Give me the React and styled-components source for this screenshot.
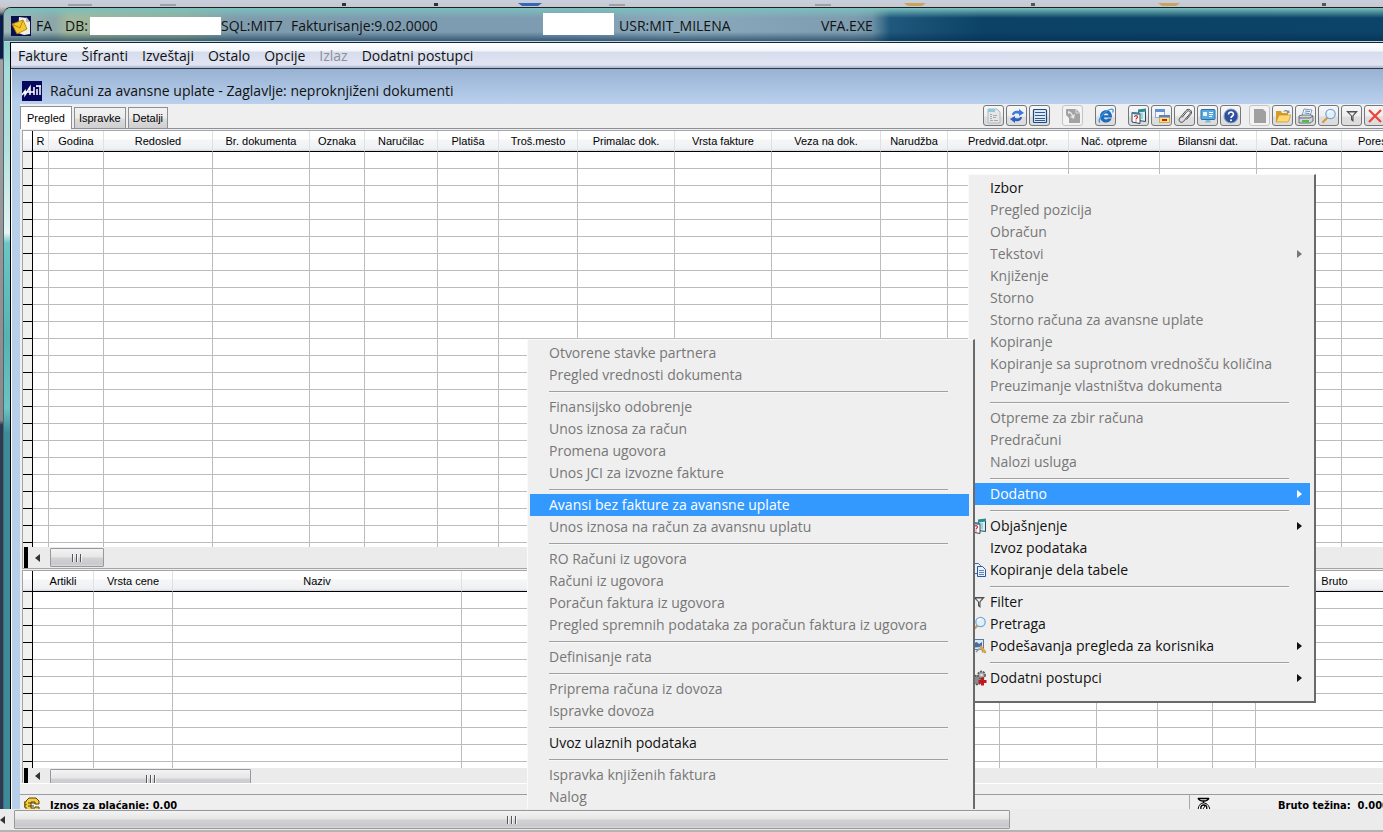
import React from 'react';
import styled, { createGlobalStyle, css } from 'styled-components';

const UI_FONT = '"Open Sans", "Noto Sans", sans-serif';
const SMALL_FONT = '"Liberation Sans", Arial, sans-serif';

const MENU_BAR = [
    { label: 'Fakture' },
    { label: 'Šifranti' },
    { label: 'Izveštaji' },
    { label: 'Ostalo' },
    { label: 'Opcije' },
    { label: 'Izlaz', disabled: true },
    { label: 'Dodatni postupci' },
];

const TABS = ['Pregled', 'Ispravke', 'Detalji'];

const TOOL_GROUPS = [
    [
        { icon: 'form', label: 'Obrazac', off: true },
        { icon: 'refresh', label: 'Osveži' },
        { icon: 'list', label: 'Lista' },
    ],
    [{ icon: 'export', label: 'Izvoz', off: true, faint: true }],
    [{ icon: 'browser', label: 'Internet' }],
    [
        { icon: 'explain', label: 'Objašnjenje' },
        { icon: 'windows', label: 'Prozori' },
        { icon: 'clip', label: 'Prilozi' },
        { icon: 'monitor', label: 'Podešavanja' },
        { icon: 'help', label: 'Pomoć' },
    ],
    [
        { icon: 'blank', label: 'Novi', off: true, faint: true },
        { icon: 'folder', label: 'Otvori' },
        { icon: 'printer', label: 'Štampa' },
        { icon: 'search', label: 'Pretraga' },
        { icon: 'filter', label: 'Filter' },
        { icon: 'close', label: 'Zatvori' },
    ],
];

const INVOICE_COLUMNS = [
    ['R', 16],
    ['Godina', 55],
    ['Redosled', 109],
    ['Br. dokumenta', 97],
    ['Oznaka', 55],
    ['Naručilac', 73],
    ['Platiša', 61],
    ['Troš.mesto', 79],
    ['Primalac dok.', 97],
    ['Vrsta fakture', 97],
    ['Veza na dok.', 109],
    ['Narudžba', 67],
    ['Predviđ.dat.otpr.', 121],
    ['Nač. otpreme', 91],
    ['Bilansni dat.', 97],
    ['Dat. računa', 85],
    ['Poreski dat.', 91],
];

const ITEM_COLUMNS = [
    ['Artikli', 61],
    ['Vrsta cene', 79],
    ['Naziv', 289],
    ['', 538],
    ['', 97],
    ['', 61],
    ['', 55],
    ['', 43],
    ['Bruto', 158],
];

const CONTEXT_MENU = [
    { label: 'Izbor' },
    { label: 'Pregled pozicija', disabled: true },
    { label: 'Obračun', disabled: true },
    { label: 'Tekstovi', disabled: true, more: true },
    { label: 'Knjiženje', disabled: true },
    { label: 'Storno', disabled: true },
    { label: 'Storno računa za avansne uplate', disabled: true },
    { label: 'Kopiranje', disabled: true },
    { label: 'Kopiranje sa suprotnom vrednošču količina', disabled: true },
    { label: 'Preuzimanje vlastništva dokumenta', disabled: true },
    null,
    { label: 'Otpreme za zbir računa', disabled: true },
    { label: 'Predračuni', disabled: true },
    { label: 'Nalozi usluga', disabled: true },
    null,
    { label: 'Dodatno', active: true, more: true },
    null,
    { label: 'Objašnjenje', icon: 'explain', more: true },
    { label: 'Izvoz podataka' },
    { label: 'Kopiranje dela tabele', icon: 'copy' },
    null,
    { label: 'Filter', icon: 'filter' },
    { label: 'Pretraga', icon: 'search' },
    { label: 'Podešavanja pregleda za korisnika', icon: 'settings', more: true },
    null,
    { label: 'Dodatni postupci', icon: 'gears', more: true },
];

const SUB_MENU = [
    { label: 'Otvorene stavke partnera', disabled: true },
    { label: 'Pregled vrednosti dokumenta', disabled: true },
    null,
    { label: 'Finansijsko odobrenje', disabled: true },
    { label: 'Unos iznosa za račun', disabled: true },
    { label: 'Promena ugovora', disabled: true },
    { label: 'Unos JCI za izvozne fakture', disabled: true },
    null,
    { label: 'Avansi bez fakture za avansne uplate', active: true },
    { label: 'Unos iznosa na račun za avansnu uplatu', disabled: true },
    null,
    { label: 'RO Računi iz ugovora', disabled: true },
    { label: 'Računi iz ugovora', disabled: true },
    { label: 'Poračun faktura iz ugovora', disabled: true },
    { label: 'Pregled spremnih podataka za poračun faktura iz ugovora', disabled: true },
    null,
    { label: 'Definisanje rata', disabled: true },
    null,
    { label: 'Priprema računa iz dovoza', disabled: true },
    { label: 'Ispravke dovoza', disabled: true },
    null,
    { label: 'Uvoz ulaznih podataka' },
    null,
    { label: 'Ispravka knjiženih faktura', disabled: true },
    { label: 'Nalog', disabled: true },
];

const ICONS = {
    form: (
        <>
            <path d="M2 1h9l3 3v11H2z" fill="#e4e6e8" stroke="#b4b8bb" />
            <path d="M2 1h7v3H2z" fill="#8ccbe0" />
            <path d="M4 6.500h2M4 8.500h2M4 10.500h2M4 12.500h3M7 7.500h4M7 9.500h3M8 12.500h4" stroke="#a4a9ac" />
        </>
    ),
    refresh: (
        <>
            <path d="M3 7c0-3 3-5 7-4V1l5 4-5 3V6C7 5 5 6 5 7z" fill="#3a7be0" />
            <path d="M13 9c0 3-3 5-7 4v2l-5-4 5-3v2c3 1 5 0 5-1z" fill="#2a62c8" />
        </>
    ),
    list: (
        <>
            <rect x="1.5" y="1.5" width="13" height="13" rx="1" fill="#dcebf7" stroke="#1d4a80" strokeWidth="1.2" />
            <path d="M3 4.5h10M3 7.5h10M3 10.5h10M3 12.5h10" stroke="#2d5a90" />
        </>
    ),
    export: (
        <>
            <path d="M1 1h10l4 4v10H4v-5L1 7z" fill="#a3a3a3" />
            <path d="M3 3l3 1 2 3 2-1-1 5-4-2 2-1-2-3-2 1z" fill="#e6e6e6" />
            <path d="M11 1v4h4" stroke="#dcdcdc" fill="none" />
        </>
    ),
    browser: (
        <>
            <path
                d="M14 9.500H5.800c.2 2.200 3 2.600 4.200 1h3.600C12.800 13 10.600 14.500 8.200 14.500c-3.600 0-6.200-2.600-6.200-6.100C2 5 4.600 2.300 8.200 2.300S14.200 5 14 9.500zM5.800 7.200h4.700C10.300 4.900 6.200 4.900 5.800 7.200z"
                fill="#1c6cc0"
            />
            <path d="M2 14.500c-2.500-2 2.500-10.500 10-13 3-1 4 .5 2.500 3" fill="none" stroke="#3b97e0" strokeWidth="1.300" />
        </>
    ),
    explain: (
        <>
            <path d="M7.500 2.500l7-1v12l-7-1z" fill="#d5eef2" stroke="#2f4858" />
            <path d="M7 1.500l8-1v3l-8 1z" fill="#2f8c90" />
            <path d="M1 4.500l8 1v10l-8-1.500z" fill="#fff" stroke="#2f4858" />
            <path d="M1 4l8 1v2l-8-1z" fill="#3c7fa0" />
            <path d="M3.500 9c0-2 3-1.500 3 0 0 1-1.500 1-1.500 2.500M5 12.500v1" fill="none" stroke="#d8303a" strokeWidth="1.300" />
            <path d="M11 5v6" stroke="#7bb0bb" />
        </>
    ),
    windows: (
        <>
            <rect x="1.5" y="1.5" width="9" height="8" fill="#f4f8fc" stroke="#8facd4" />
            <path d="M1 1h10v3H1z" fill="#5f91d4" />
            <rect x="5.5" y="7.5" width="10" height="7" fill="#ffe271" stroke="#c9b060" />
            <path d="M5 7h11v2.500H5z" fill="#5b82bf" />
            <path d="M8 11h5v2H8z" fill="#c8201c" />
        </>
    ),
    clip: (
        <path
            d="M5 9.500l5-6c1.600-1.900 4.400.3 2.900 2.200l-6.300 7.600c-2.200 2.700-6 -.4-3.900-3.100L9 2.500c2.600-3.100 7.400.6 4.800 3.900L9.500 11.500"
            fill="none"
            stroke="#4a4a4a"
        />
    ),
    monitor: (
        <>
            <rect x="1" y="1.500" width="14" height="10" rx="1" fill="#58a9df" stroke="#2a70a8" />
            <rect x="3" y="4" width="4" height="4" fill="#e8f4fb" />
            <path d="M9 4.500h4M9 6.500h4M9 8.500h3" stroke="#fff" />
            <path d="M6 12h4l1 2.500H5z" fill="#7fbbe0" />
        </>
    ),
    help: (
        <>
            <circle cx="8" cy="8" r="7" fill="#2c4f9f" stroke="#8d9cb8" />
            <path d="M5.500 6.500c0-3.500 5-3 5 0C10.500 8 8 8 8 10" fill="none" stroke="#fff" strokeWidth="1.600" />
            <circle cx="8" cy="12.300" r="1" fill="#fff" />
        </>
    ),
    blank: <path d="M2 1h9l3 3v11H2z" fill="#a0a0a0" />,
    folder: (
        <>
            <path d="M1 3h5l1 2h6v9H1z" fill="#d69b28" />
            <path d="M4 7h12l-3 7H1z" fill="#ffd870" stroke="#c08a20" strokeWidth=".6" />
            <path d="M8 4c1.500-2.500 4-2.500 5-1l1.200-1 .3 3.200-3.200-.4L12.300 4C11 3 9.500 3 8 4z" fill="#7d8b98" />
        </>
    ),
    printer: (
        <>
            <path d="M6 1l8 1-2 6H4z" fill="#fff" stroke="#6d7f98" strokeWidth=".8" />
            <path d="M7 3l5 .5M6.500 5l5 .5" stroke="#4b86c8" />
            <path d="M1 8l3-1h9l2 1v5l-3 2H1z" fill="#d0d5da" stroke="#4f5a66" strokeWidth=".8" />
            <path d="M1 10h11l3-2" fill="none" stroke="#5f6a75" />
            <path d="M4 12h7v2.500H4z" fill="#55b848" />
        </>
    ),
    search: (
        <>
            <path d="M6.500 9.500L2 14" stroke="#d89a4a" strokeWidth="2.400" strokeLinecap="round" />
            <circle cx="9.500" cy="6" r="4.700" fill="#dff0fb" stroke="#7aa7d4" strokeWidth="1.300" />
            <path d="M7 5c.5-1.500 2-2 3-1.800" fill="none" stroke="#fff" strokeWidth="1.200" />
        </>
    ),
    filter: <path d="M2 3h12l-4.500 5v6L7 12V8zM5 4.500L8.200 8v3l.3.300V7.500l2.500-3z" fill="#505050" fillRule="evenodd" />,
    close: <path d="M2 2l12 12M14 2L2 14" stroke="#ee4438" strokeWidth="2.200" />,
    copy: (
        <>
            <path d="M1.500 1.500h6l2 2v8h-8z" fill="#e9f1fb" stroke="#3f66ad" />
            <path d="M6.500 4.500h5l3 3v7h-8z" fill="#e9f1fb" stroke="#2d54a0" />
            <path d="M8 8.500h5M8 10.500h5M8 12.500h5" stroke="#5b84c8" />
        </>
    ),
    settings: (
        <>
            <rect x="1.500" y="1.500" width="11" height="10" fill="#dbe9f6" stroke="#5b78a5" />
            <path d="M3 9.500V5l3-1 2 2 3-2v5z" fill="#4a6d9f" />
            <path d="M5 14l3-3 3 .5 1 3" fill="none" stroke="#8a97a8" strokeWidth="1.500" />
            <path d="M10 9l4 5" stroke="#e0a23a" strokeWidth="2.600" strokeLinecap="round" />
        </>
    ),
    gears: (
        <>
            <circle cx="6" cy="10" r="4.500" fill="#8b8b8b" stroke="#4c4c4c" strokeDasharray="2 1" strokeWidth="1.600" />
            <circle cx="10.500" cy="5" r="3.600" fill="#a5a5a5" stroke="#5a5a5a" strokeDasharray="2 1" strokeWidth="1.600" />
            <circle cx="10.500" cy="5" r="1.300" fill="#e2e2e2" />
            <path d="M11.500 7.500v8M7.500 11.500h8" stroke="#c8141c" strokeWidth="3" />
        </>
    ),
};

const Icon = ({ name }) => (
    <svg width="16" height="16" viewBox="0 0 16 16" fill="none" aria-hidden="true">
        {ICONS[name]}
    </svg>
);

const DesktopMarks = () => (
    <svg width="1383" height="7" aria-hidden="true">
        <path d="M68 5h24M160 5h16M609 5h16M815 5h16" stroke="#75767b" strokeWidth="1" />
        <path d="M342 3h4v3h-4zM434 3h4v3h-4z" fill="#333" />
        <path d="M518 3h24l-4 3h-16z" fill="#3565b8" />
        <path d="M904 3h22l-4 3h-14zM1158 3h22l-4 3h-14z" fill="#c8a45e" />
        <path d="M1031 3h4v3h-4zM1322 3h4v3h-4z" fill="#555" />
    </svg>
);

const AppIcon = () => (
    <svg width="20" height="20" viewBox="0 0 20 20" aria-hidden="true">
        <rect width="20" height="20" fill="#0a0f50" />
        <path d="M8 1l8 1 3 4v12l-6 1-6-2z" fill="#f2f0e2" />
        <path d="M15 1v5h4z" fill="#b9b9ad" />
        <path d="M1 8l11-4 4 9-10 5z" fill="#f4c92c" stroke="#a87b08" strokeWidth=".8" />
        <path d="M1 8l8 4 3-8" fill="none" stroke="#b78a10" />
    </svg>
);

const MitIcon = () => (
    <svg width="20" height="20" viewBox="0 0 20 20" aria-hidden="true">
        <rect width="20" height="20" fill="#05085c" />
        <path d="M0 14l3-4v4l5-8v8M3 11h9M12 14V6M15 14V8M15 6V5M14 5h5M18 5v9" fill="none" stroke="#fff" strokeWidth="1.500" />
    </svg>
);

const MoneyIcon = () => (
    <svg width="16" height="16" viewBox="0 0 16 16" aria-hidden="true">
        <path d="M5 1h7l3 3v3h-4V5H7v6h4v-1h4v2l-3 3H5l-3-3v-2H0V8h2V7H0V5h2V4z" fill="#f5cd38" stroke="#5a4208" />
        <path d="M4 6h7M4 9h6" stroke="#5a4208" />
    </svg>
);

const ScaleIcon = () => (
    <svg width="14" height="16" viewBox="0 0 14 16" aria-hidden="true">
        <path d="M1 1.500h11M1 1c1 3 3 3 5.500 3S11 4 12 1M6.500 4v2" fill="none" stroke="#000" strokeWidth="1.300" />
        <path d="M1 15c0-6 2-9 5.500-9S13 9 13 15z" fill="#fff" stroke="#000" />
        <circle cx="6.800" cy="11" r="3" fill="#fff" stroke="#000" strokeWidth="1.300" />
        <path d="M6 12l2-3" stroke="#000" />
    </svg>
);

const GlobalStyle = createGlobalStyle`
    * { box-sizing: border-box; }
    body {
        margin: 0;
        overflow: hidden;
        background: #efefef;
        font-family: ${UI_FONT};
        font-size: 14px;
        color: #111;
    }
    button {
        font: inherit;
        color: inherit;
        border: 0;
        padding: 0;
        margin: 0;
        background: none;
        text-align: left;
        white-space: nowrap;
    }
    svg { display: block; flex: none; }
`;

const Page = styled.div`
    display: flex;
    flex-direction: column;
    height: 100vh;
`;

const Stage = styled.div`
    position: relative;
    flex: 1;
    min-height: 0;
    display: flex;
    flex-direction: column;
    overflow: hidden;
    background: linear-gradient(#c9ced9 0, #c9c6ca 7px, #8f8d90 12px, #0c1c4a 16px, #0c1c4a 58px, #a3a0a3 60px, #8c898b 420px, #2b3a55 425px);
`;

const DesktopStrip = styled.div`
    height: 7px;
    flex: none;
    overflow: hidden;
    background: linear-gradient(#c6d0df, #cbc7cb);
`;

const AppWindow = styled.div`
    flex: 1;
    min-height: 0;
    display: flex;
    flex-direction: column;
    margin-left: 3px;
    border-top: 1px solid #14242c;
    border-left: 1px solid #4d686c;
    border-radius: 8px 0 0 0;
    overflow: hidden;
    background: linear-gradient(#74bdbb 0, #a5dcda 60px, #b2e0de 140px, #e4f5f4 225px, #6cc6c6 235px, #56b3b4 330px, #6cc4c4 400px, #3d8b98 425px);
`;

const TitleBar = styled.header`
    height: 34px;
    flex: none;
    display: grid;
    grid-template-columns: 20px 29px 30px 131px 70px 252px 71px 207px 1fr;
    align-items: center;
    padding: 2px 0 0 7px;
    border-bottom: 1px solid #c2d4de;
    line-height: 20px;
    white-space: nowrap;
    background:
        linear-gradient(#7cc0bd 0, rgba(124, 192, 189, 0) 10px),
        linear-gradient(rgba(6, 44, 76, 0) 24px, rgba(6, 44, 76, 0.6) 33px),
        linear-gradient(90deg, #9fb9b9 0, #8da7a8 50px, #a3b89c 65px, #93ae9a 180px, #7f9cae 230px, #7d9cb2 560px, #8aa9bb 680px, #7d9cb0 850px, #6f92a6 868px, #1f587c 886px, #0b4266 980px, #0b4468 100%);

    span { padding-left: 5px; }
`;

const Redacted = styled.i`
    height: ${({ $tall }) => ($tall ? 22 : 18)}px;
    background: #fff;
    align-self: center;
    ${({ $tall }) => $tall && css`margin-bottom: 4px;`}
`;

const Body = styled.div`
    flex: 1;
    min-height: 0;
    display: flex;
    flex-direction: column;
    margin-left: 6px;
    border-left: 1px solid #000;
    border-top: 1px solid #10283c;
    background: #fff;
`;

const MenuBar = styled.nav`
    display: flex;
    gap: 14px;
    flex: none;
    height: 26px;
    padding-left: 7px;
    border-bottom: 1px solid #2c3850;
    background: linear-gradient(#fff 0, #f3f6fb 8px, #d5dded 9px, #e3e4f2 22px, #b4bccf 24px);
    line-height: 26px;
`;

const MenuBarButton = styled.button`
    &:disabled { color: #8f8f9a; }
`;

const ChildWindow = styled.main`
    flex: 1;
    min-height: 0;
    display: flex;
    flex-direction: column;
    margin: 0 -2px 0 1px;
    background: #b8cfe9;
`;

const ChildTitle = styled.h1`
    display: flex;
    align-items: center;
    gap: 8px;
    flex: none;
    height: 35px;
    margin: 0;
    padding: 8px 0 0 10px;
    font-size: 14px;
    font-weight: 400;
    background: linear-gradient(#99b2d2, #b9d1ee);
`;

const Client = styled.div`
    flex: 1;
    min-height: 0;
    display: flex;
    flex-direction: column;
    margin-left: 8px;
    background: #efefef;
`;

const TabRow = styled.div`
    display: flex;
    justify-content: space-between;
    align-items: flex-end;
    height: 25px;
    flex: none;
    border-bottom: 1px solid #8c9096;
`;

const TabList = styled.div`
    display: flex;
    align-items: flex-end;
    gap: 2px;
    font-family: ${SMALL_FONT};
    font-size: 11px;
`;

const Tab = styled.button`
    height: 21px;
    padding: 0 4px;
    border: 1px solid #8c9096;
    border-bottom: 0;
    color: #000;
    background: linear-gradient(#f2f2f2 0, #ebebeb 10px, #dcdcdc 11px, #cfcfcf 100%);

    &[aria-selected='true'] {
        height: 23px;
        padding: 0 6px;
        margin-bottom: -1px;
        background: #fff;
    }
`;

const Toolbar = styled.div`
    display: flex;
    align-self: flex-start;
    padding-top: 1px;
`;

const ToolGroup = styled.div`
    display: flex;
    gap: 2px;
    margin-left: 12px;

    &:last-child { margin-left: 8px; }
`;

const ToolButton = styled.button`
    display: flex;
    align-items: center;
    justify-content: center;
    width: 21px;
    height: 21px;
    border: 1px solid ${({ $faint }) => ($faint ? '#c4c4c4' : '#74777b')};
    border-radius: 3px;
    background: linear-gradient(#f7f7f7 0, #eee 10px, #dedede 11px, #dcdcdc 100%);
    ${({ $faint }) => $faint && css`background: #f3f3f3;`}
`;

const Pane = styled.section`
    display: flex;
    flex-direction: column;
    min-height: 0;
    margin: 1px 0 0 2px;
    border: solid #a3a5a9;
    border-width: 1px 0 0 1px;
    ${({ $grow }) => ($grow ? css`flex: 1; border-bottom-width: 1px;` : css`flex: 0 0 213px;`)}
`;

const GridView = styled.div`
    flex: 1;
    min-height: 0;
    overflow: hidden;
    background: #fff;
`;

const Grid = styled.table`
    table-layout: fixed;
    border-collapse: separate;
    border-spacing: 0;
    font-family: ${SMALL_FONT};
    font-size: 11px;
    line-height: 13px;
`;

const HeadCell = styled.th`
    height: 21px;
    padding: 0;
    overflow: hidden;
    font-weight: 400;
    white-space: nowrap;
    color: #000;
    border-right: 1px solid ${({ $mark }) => ($mark ? '#000' : '#dfe0e3')};
    border-bottom: 1px solid #000;
    background: linear-gradient(#fff 0, #fff 8px, #f5f6f8 9px, #eff0f3 18px, #d4d5d8 20px);
`;

const Cell = styled.td`
    height: 17px;
    padding: 0;
    border: solid ${({ $mark }) => ($mark ? '#000' : '#bcbcbc')};
    border-width: 0 1px 1px 0;
    background: ${({ $mark }) => ($mark ? '#f0f0ee' : '#fff')};
`;

const Scroll = styled.div`
    display: flex;
    flex: none;
    height: ${({ $height }) => $height}px;
    padding-left: 1px;
    overflow: hidden;
    background: #ebebeb;
`;

const MainScroll = styled(Scroll)`
    padding-left: 0;
    border-bottom: 2px solid #b4b4b4;
`;

const ScrollStop = styled.i`
    width: 4px;
    background: #000;
`;

const ScrollArrow = styled.button`
    display: flex;
    align-items: center;
    justify-content: center;
    width: ${({ $wide }) => ($wide ? 22 : 14)}px;
    flex: none;

    &::before {
        content: '';
        border: solid transparent;
        border-width: 4px 5px 4px 0;
        border-right-color: #333;
        margin-right: ${({ $wide }) => ($wide ? 4 : 10)}px;
    }
`;

const ScrollThumb = styled.div`
    display: flex;
    align-items: center;
    justify-content: center;
    gap: 2px;
    flex: none;
    width: ${({ $size }) => $size};
    height: 19px;
    margin-top: 1px;
    border: 1px solid #98989c;
    border-radius: 1px;
    background: linear-gradient(#f3f3f3 0, #e6e6e7 8px, #d2d2d5 9px, #c9c9cd 15px, #dadadc 100%);

    i {
        width: 2px;
        height: 8px;
        border-left: 1px solid #55575b;
        border-right: 1px solid #f4f4f4;
    }
`;

const StatusBar = styled.footer`
    display: flex;
    flex: none;
    height: 26px;
    padding-top: 10px;
    border-top: 1px solid #fff;
    overflow: hidden;
`;

const StatusCell = styled.div`
    display: flex;
    gap: ${({ $side }) => ($side ? 67 : 10)}px;
    flex: ${({ $side }) => ($side ? '0 0 196px' : '1')};
    padding: 2px 0 0 ${({ $side }) => ($side ? 7 : 4)}px;
    border-top: 1px solid #9c9c9c;
    border-left: ${({ $side }) => ($side ? '1px solid #a8a8a8' : '0')};
    color: #000;
    font: bold 11px/18px "DejaVu Sans Condensed", "DejaVu Sans", sans-serif;
    white-space: pre;
    overflow: hidden;
`;

const Popup = styled.div`
    position: absolute;
    width: ${({ $width }) => $width}px;
    left: ${({ $left }) => $left}px;
    top: ${({ $top }) => $top}px;
    padding: 2px 4px 12px 2px;
    border: solid #fafafa;
    border-width: 1px 2px 2px 1px;
    border-right-color: #6a6a6a;
    border-bottom-color: #6a6a6a;
    background: #efefef;
`;

const PopupItem = styled.button`
    display: grid;
    grid-template-columns: 16px 1fr 5px;
    column-gap: 3px;
    align-items: center;
    width: 100%;
    height: 22px;
    padding-right: 8px;
    line-height: 22px;
    color: ${({ $active }) => ($active ? '#fff' : '#111')};
    background: ${({ $active }) => ($active ? '#3399ff' : 'transparent')};

    &:disabled { color: #777; }
`;

const MoreArrow = styled.i`
    border: solid transparent;
    border-width: 4px 0 4px 5px;
    border-left-color: currentColor;
`;

const Divider = styled.hr`
    height: 2px;
    margin: 5px 21px 3px 19px;
    border: solid #a0a0a0;
    border-width: 1px 0 0;
    border-bottom: 1px solid #f8f8f8;
`;

const Thumb = ({ size }) => (
    <ScrollThumb $size={size}>
        <i />
        <i />
        <i />
    </ScrollThumb>
);

const DataGrid = ({ columns, rows }) => (
    <GridView>
        <Grid style={{ width: columns.reduce((sum, [, w]) => sum + w, 10) }}>
            <colgroup>
                <col style={{ width: 10 }} />
                {columns.map(([, width], i) => (
                    <col key={i} style={{ width }} />
                ))}
            </colgroup>
            <thead>
                <tr>
                    <HeadCell $mark />
                    {columns.map(([name], i) => (
                        <HeadCell key={i}>{name}</HeadCell>
                    ))}
                </tr>
            </thead>
            <tbody>
                {Array.from({ length: rows }, (_, r) => (
                    <tr key={r}>
                        <Cell $mark />
                        {columns.map((_, i) => (
                            <Cell key={i} />
                        ))}
                    </tr>
                ))}
            </tbody>
        </Grid>
    </GridView>
);

const PopupMenu = ({ items, ...place }) => (
    <Popup role="menu" {...place}>
        {items.map((item, i) =>
            item ? (
                <PopupItem key={i} role="menuitem" disabled={item.disabled} $active={item.active}>
                    {item.icon ? <Icon name={item.icon} /> : <i />}
                    <span>{item.label}</span>
                    {item.more && <MoreArrow />}
                </PopupItem>
            ) : (
                <Divider key={i} />
            )
        )}
    </Popup>
);

const App = () => {
    return (
        <Page>
            <GlobalStyle />
            <Stage>
                <DesktopStrip>
                    <DesktopMarks />
                </DesktopStrip>
                <AppWindow>
                    <TitleBar>
                        <AppIcon />
                        <span>FA</span>
                        <span>DB:</span>
                        <Redacted />
                        <div>SQL:MIT7</div>
                        <div>Fakturisanje:9.02.0000</div>
                        <Redacted $tall />
                        <span>USR:MIT_MILENA</span>
                        <div>VFA.EXE</div>
                    </TitleBar>
                    <Body>
                        <MenuBar>
                            {MENU_BAR.map(({ label, disabled }) => (
                                <MenuBarButton key={label} disabled={disabled}>{label}</MenuBarButton>
                            ))}
                        </MenuBar>
                        <ChildWindow>
                            <ChildTitle>
                                <MitIcon />
                                Računi za avansne uplate - Zaglavlje: neproknjiženi dokumenti
                            </ChildTitle>
                            <Client>
                                <TabRow>
                                    <TabList role="tablist">
                                        {TABS.map((tab, i) => (
                                            <Tab key={tab} role="tab" aria-selected={i === 0}>{tab}</Tab>
                                        ))}
                                    </TabList>
                                    <Toolbar>
                                        {TOOL_GROUPS.map((group, i) => (
                                            <ToolGroup key={i}>
                                                {group.map(({ icon, label, off, faint }) => (
                                                    <ToolButton key={icon} aria-label={label} disabled={off} $faint={faint}>
                                                        <Icon name={icon} />
                                                    </ToolButton>
                                                ))}
                                            </ToolGroup>
                                        ))}
                                    </Toolbar>
                                </TabRow>
                                <Pane $grow>
                                    <DataGrid columns={INVOICE_COLUMNS} rows={40} />
                                    <Scroll $height={21}>
                                        <ScrollStop />
                                        <ScrollArrow $wide aria-label="Levo" />
                                        <Thumb size="54px" />
                                    </Scroll>
                                </Pane>
                                <Pane>
                                    <DataGrid columns={ITEM_COLUMNS} rows={12} />
                                    <Scroll $height={15}>
                                        <ScrollStop />
                                        <ScrollArrow $wide aria-label="Levo" />
                                        <Thumb size="201px" />
                                    </Scroll>
                                </Pane>
                                <StatusBar>
                                    <StatusCell>
                                        <MoneyIcon />
                                        Iznos za plaćanje: 0.00
                                    </StatusCell>
                                    <StatusCell $side>
                                        <ScaleIcon />
                                        {'Bruto težina:  0.000'}
                                    </StatusCell>
                                </StatusBar>
                            </Client>
                        </ChildWindow>
                    </Body>
                </AppWindow>
                <PopupMenu items={CONTEXT_MENU} $left={968} $top={174} $width={348} />
                <PopupMenu items={SUB_MENU} $left={527} $top={339} $width={448} />
            </Stage>
            <MainScroll $height={23}>
                <ScrollArrow aria-label="Levo" />
                <Thumb size="72%" />
            </MainScroll>
        </Page>
    );
};

export default App;
